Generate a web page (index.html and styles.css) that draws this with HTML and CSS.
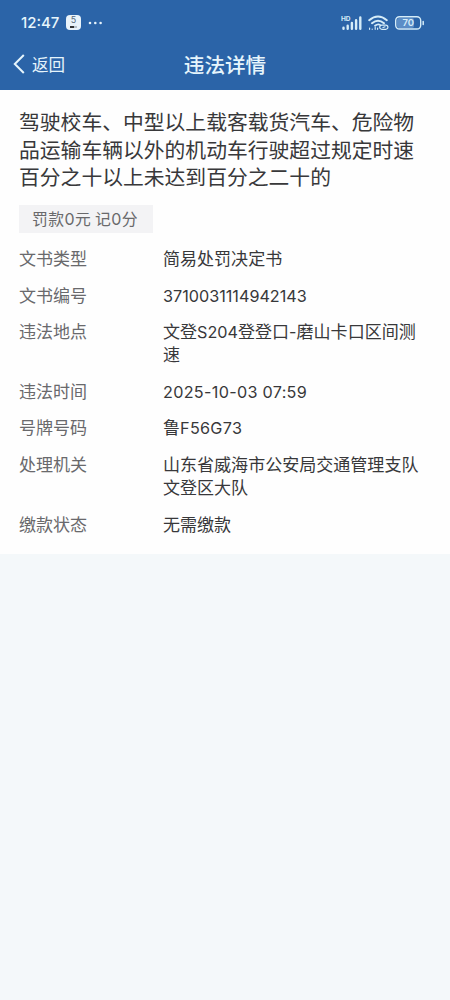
FILE: index.html
```html
<!DOCTYPE html>
<html lang="zh-CN">

<head>
    <meta charset="UTF-8">
    <meta name="viewport" content="width=device-width, initial-scale=1.0">
    <title>违法详情</title>
    <link rel="stylesheet" href="styles.css">
</head>

<body>

    <header class="header">
        <!-- 状态栏 -->
        <div class="status-bar">
            <div class="status-left">
                <span class="clock">12:47</span>
                <span class="app-icon">5<i></i></span>
                <svg class="dots" width="15" height="4" viewBox="0 0 15 4" fill="#e6f3fc">
                    <circle cx="2" cy="2" r="1.3" />
                    <circle cx="7.3" cy="2" r="1.3" />
                    <circle cx="12.6" cy="2" r="1.3" />
                </svg>
            </div>
            <div class="status-right">
                <svg width="22" height="16" viewBox="0 0 22 16">
                    <text class="hd" x="0" y="6">HD</text>
                    <path d="M2.5 12.8v.9M6.7 10.8v2.9M10.9 8v5.7M15.1 5.3v8.4M19.3 2.5v11.2" stroke="#d5ecf8" stroke-width="2.4" stroke-linecap="round" />
                </svg>
                <svg class="wifi" width="21" height="16" viewBox="0 0 21 16" fill="none" stroke="#d5ecf8" stroke-linecap="round">
                    <path d="M1.2 5.2Q10 -2.2 18.8 5.2M4 8.2Q10 3.2 16 8.2" stroke-width="2" />
                    <path d="M7 10.8Q10 8.4 12 9.9" stroke-width="1.8" />
                    <path d="M1.6 13v1.3M4.2 14v.3M7.2 12.4v1.9M9.6 13v1.3" stroke-width="1.2" />
                    <path d="M15.2 14.3h-1.4a2 2 0 0 1 0-4.2h2M16 10.1h1.8a2 2 0 0 1 0 4.2h-2M15 12.5l2-.7" stroke-width="1.2" />
                </svg>
                <svg class="battery" width="30" height="14" viewBox="0 0 30 14">
                    <rect x="2" y="2" width="17" height="10" rx="2" fill="#5b8dc6" />
                    <rect x=".7" y=".7" width="25" height="12.3" rx="3.8" fill="none" stroke="#d5ecf8" stroke-width="1.4" />
                    <path d="M28.2 5.5v3" stroke="#d5ecf8" stroke-width="1.5" stroke-linecap="round" />
                    <text class="level" x="13.2" y="10.4" text-anchor="middle">70</text>
                </svg>
            </div>
        </div>

        <!-- 导航栏 -->
        <nav class="nav-bar">
            <div class="back">
                <svg width="12" height="20" viewBox="0 0 12 20" fill="none" stroke="#e6f5fc" stroke-width="2">
                    <path d="M10.8 1L1.8 10l9 9" />
                </svg>
                <span>返回</span>
            </div>
            <h1>违法详情</h1>
        </nav>
    </header>

    <main class="detail">
        <h2>驾驶校车、中型以上载客载货汽车、危险物品运输车辆以外的机动车行驶超过规定时速百分之十以上未达到百分之二十的</h2>
        <div class="tag">罚款<span class="num">0</span>元 记<span class="num">0</span>分</div>

        <dl class="info">
            <dt>文书类型</dt>
            <dd>简易处罚决定书</dd>
            <dt>文书编号</dt>
            <dd><span class="num">3710031114942143</span></dd>
            <dt>违法地点</dt>
            <dd>文登<span class="num">S204</span>登登口<span class="num">-</span>磨山卡口区间测速</dd>
            <dt>违法时间</dt>
            <dd><span class="num wide">2025-10-03 07:59</span></dd>
            <dt>号牌号码</dt>
            <dd>鲁<span class="num wide">F56G73</span></dd>
            <dt>处理机关</dt>
            <dd>山东省威海市公安局交通管理支队文登区大队</dd>
            <dt>缴款状态</dt>
            <dd>无需缴款</dd>
        </dl>
    </main>

</body>

</html>
```
FILE: styles.css
```css
body {
    margin: 0;
    min-height: 100vh;
    background-color: #f4f8fa;
    font-family: "Noto Sans CJK SC", sans-serif;
    color: #38383a;
}

h1,
h2,
dl,
dd {
    margin: 0;
    font-weight: 400;
}

.header {
    height: 90px;
    background-color: #2b64a8;
    color: #e6f5fc;
}

/* 状态栏 */
.status-bar {
    display: flex;
    justify-content: space-between;
    align-items: center;
    height: 45px;
    padding: 0 25px 0 21px;
}

.status-left,
.status-right {
    display: flex;
    align-items: center;
}

.clock {
    width: 45px;
    font-family: Inter, sans-serif;
    font-size: 15px;
    font-weight: 500;
}

.app-icon {
    display: flex;
    flex-direction: column;
    align-items: center;
    width: 15px;
    height: 15px;
    border-radius: 4px;
    background-color: #e9f3fa;
    color: #56697a;
    font-family: Inter, sans-serif;
    font-size: 9px;
    line-height: 10.5px;
}

.app-icon i {
    width: 7px;
    height: 2px;
    background: linear-gradient(to right, #333 60%, #b4bfc8 60%);
}

.dots {
    margin-left: 7px;
}

.hd {
    font: 700 6.5px Inter, sans-serif;
    fill: #d5ecf8;
}

.wifi {
    margin-left: 5px;
}

.battery {
    margin-left: 6px;
}

.level {
    font: 600 9.5px Inter, sans-serif;
    fill: #d5ecf8;
}

/* 导航栏 */
.nav-bar {
    display: grid;
    grid-template-columns: 1fr auto 1fr;
    align-items: center;
    height: 38px;
}

.back {
    display: flex;
    align-items: center;
    gap: 7px;
    padding-left: 13px;
    font-size: 16.5px;
}

.nav-bar h1 {
    font-size: 20.6px;
    line-height: 32px;
    padding-bottom: 1px;
    font-weight: 500;
}

/* 详情内容 */
.detail {
    box-sizing: border-box;
    height: 464px;
    padding: 18px 28px 0 19px;
    background-color: #fefefe;
}

.detail h2 {
    margin-right: -10px;
    font-size: 20.8px;
    line-height: 27.6px;
}

.info {
    display: grid;
    grid-template-columns: 144px 1fr;
    row-gap: 13.6px;
    margin-top: 12.6px;
    font-size: 17.05px;
    line-height: 23px;
}

.info dt {
    color: #69696c;
}

.num {
    font-family: Inter, sans-serif;
    font-size: 16.2px;
    line-height: 1;
}

.wide {
    letter-spacing: 0.3px;
}

.tag {
    box-sizing: border-box;
    width: 134px;
    margin-top: 14px;
    padding-left: 13px;
    background-color: #f3f3f5;
    color: #69696b;
    font-size: 15.8px;
    line-height: 28.6px;
    letter-spacing: 0.4px;
    white-space: nowrap;
}

.tag .num {
    font-size: 16px;
}
```
